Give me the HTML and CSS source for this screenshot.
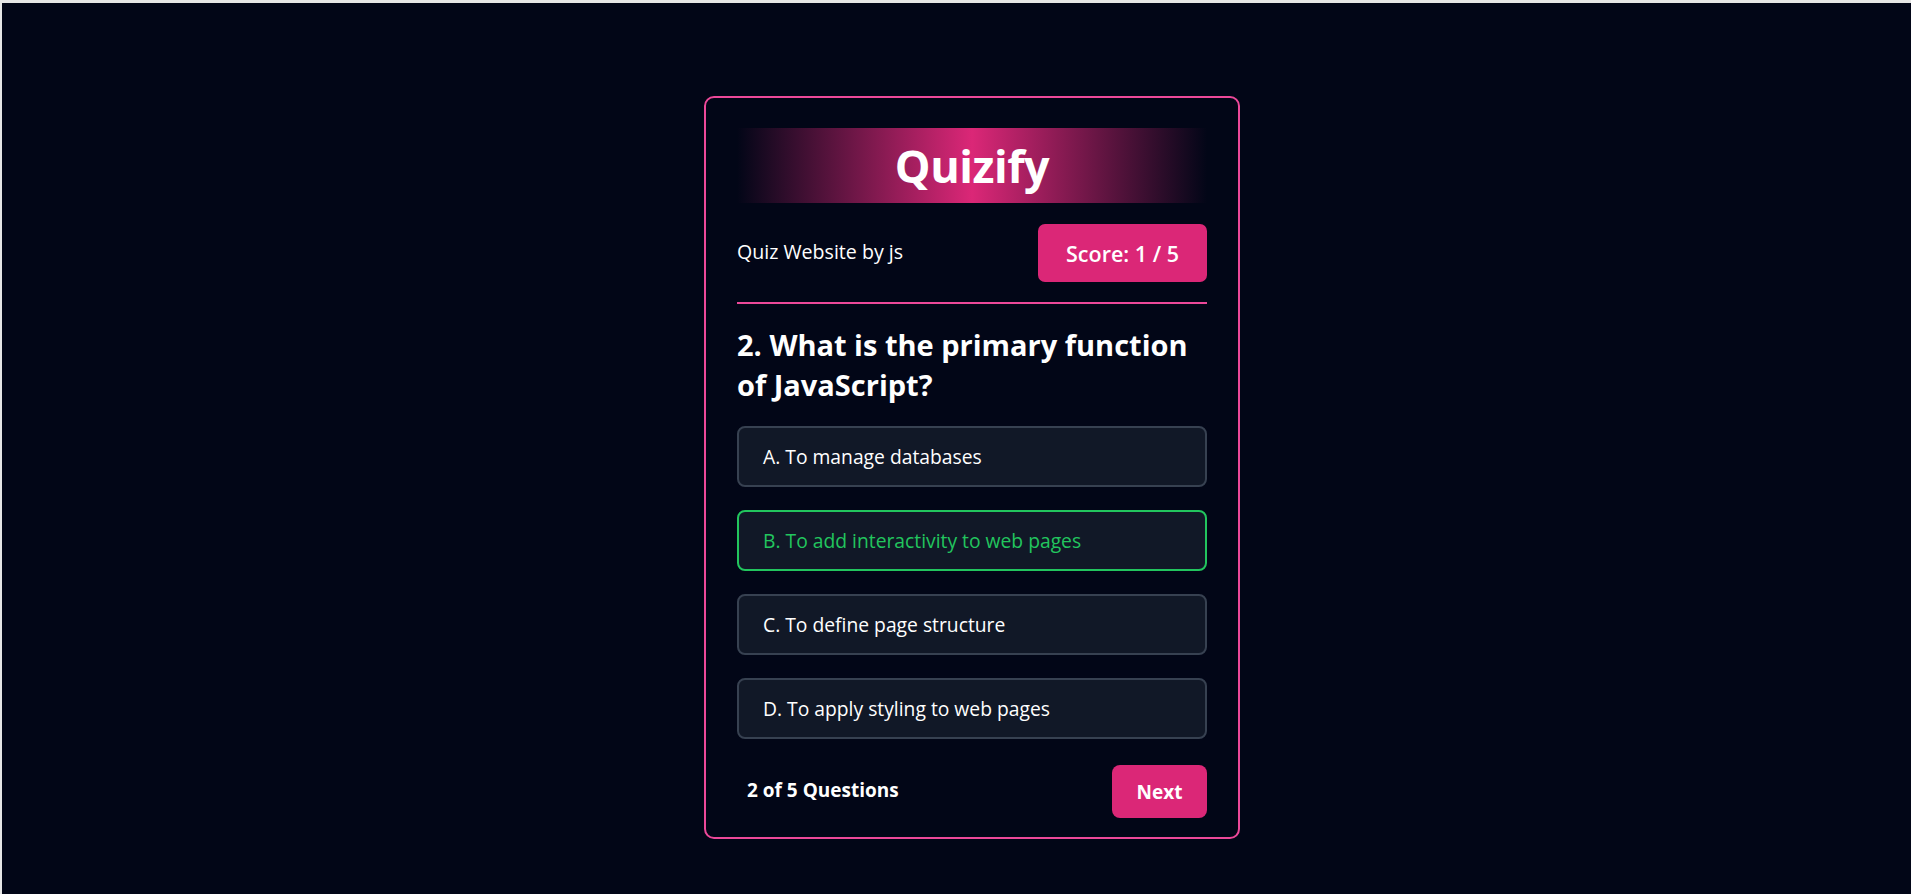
FILE: index.html
```html
<!DOCTYPE html>
<html lang="en">
<head>
<meta charset="utf-8">
<title>Quizify</title>
<link rel="stylesheet" href="styles.css">
</head>
<body>
  <main class="quiz-card">
    <header class="brand">
      <h1 class="brand-title">Quizify</h1>
    </header>
    <div class="meta-row">
      <p class="meta-text">Quiz Website by js</p>
      <div class="score">Score: 1 / 5</div>
    </div>
    <hr class="divider">
    <h2 class="question">2. What is the primary function of JavaScript?</h2>
    <ul class="options">
      <li class="option">A. To manage databases</li>
      <li class="option option-correct">B. To add interactivity to web pages</li>
      <li class="option">C. To define page structure</li>
      <li class="option">D. To apply styling to web pages</li>
    </ul>
    <footer class="quiz-footer">
      <span class="progress">2 of 5 Questions</span>
      <button class="next-btn">Next</button>
    </footer>
  </main>
</body>
</html>
```
FILE: styles.css
```css
html {
  background: #e6e6e6;
}
body {
  margin: 3px 0 0 2px;
  min-height: 891px;
  background: #020617;
  font-family: "Open Sans", "Noto Sans", sans-serif;
  color: #ffffff;
  overflow: hidden;
}
.quiz-card {
  box-sizing: border-box;
  width: 536px;
  margin: 93px 0 0 702px;
  border: 2px solid #ec4899;
  border-radius: 10px;
  padding: 30px 31px 19px;
  background: #020617;
}
.brand {
  height: 75px;
  display: flex;
  align-items: center;
  justify-content: center;
  background: linear-gradient(to right, rgba(219, 39, 119, 0) 0%, #db2777 50%, rgba(219, 39, 119, 0) 100%);
}
.brand-title {
  margin: 0;
  font-size: 45px;
  font-weight: 700;
  line-height: 1;
  letter-spacing: -0.5px;
}
.meta-row {
  display: flex;
  align-items: center;
  justify-content: space-between;
  margin-top: 21px;
}
.meta-text {
  margin: 0 0 3px;
  font-size: 19.6px;
}
.score {
  box-sizing: border-box;
  height: 58px;
  width: 169px;
  display: flex;
  align-items: center;
  justify-content: center;
  background: #db2777;
  border-radius: 7px;
  font-size: 21.5px;
  font-weight: 600;
}
.divider {
  margin: 20px 0 0;
  border: 0;
  height: 2px;
  background: #ec4899;
}
.question {
  margin: 21px 0 0;
  font-size: 29px;
  font-weight: 700;
  line-height: 40px;
}
.options {
  list-style: none;
  margin: 21px 0 0;
  padding: 0;
  display: flex;
  flex-direction: column;
  gap: 23px;
}
.option {
  box-sizing: border-box;
  height: 61px;
  display: flex;
  align-items: center;
  padding: 0 24px;
  background: #111827;
  border: 2px solid #374151;
  border-radius: 8px;
  font-size: 19.3px;
  color: #ffffff;
}
.option-correct {
  border-color: #22c55e;
  color: #22c55e;
}
.quiz-footer {
  display: flex;
  align-items: center;
  justify-content: space-between;
  margin-top: 26px;
  padding-left: 10px;
}
.progress {
  font-size: 19px;
  font-weight: 700;
  margin-bottom: 3px;
}
.next-btn {
  width: 95px;
  height: 53px;
  border: 0;
  border-radius: 8px;
  background: #db2777;
  color: #ffffff;
  font-family: inherit;
  font-size: 19px;
  font-weight: 700;
}
```
